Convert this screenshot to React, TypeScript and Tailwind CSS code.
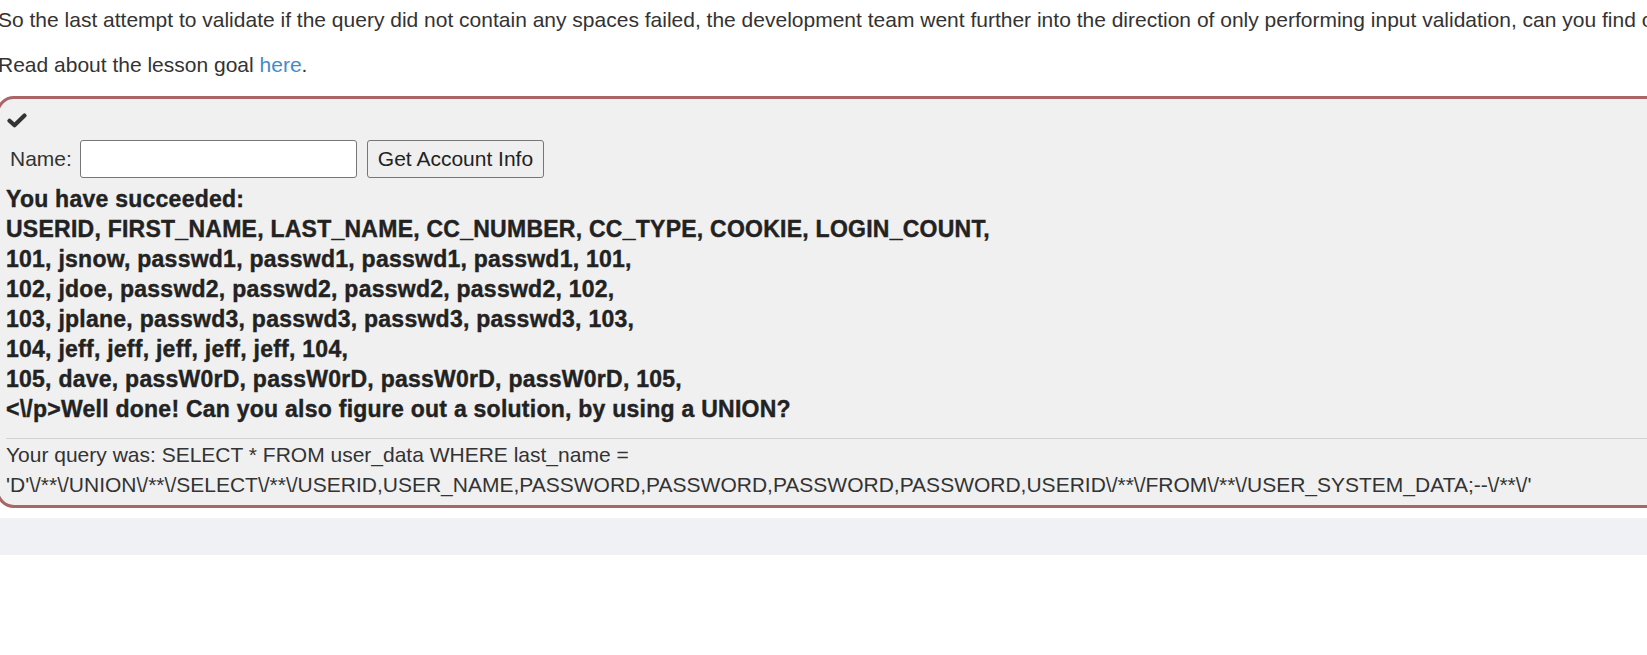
import React from 'react';

const rows = [
  'USERID, FIRST_NAME, LAST_NAME, CC_NUMBER, CC_TYPE, COOKIE, LOGIN_COUNT,',
  '101, jsnow, passwd1, passwd1, passwd1, passwd1, 101,',
  '102, jdoe, passwd2, passwd2, passwd2, passwd2, 102,',
  '103, jplane, passwd3, passwd3, passwd3, passwd3, 103,',
  '104, jeff, jeff, jeff, jeff, jeff, 104,',
  '105, dave, passW0rD, passW0rD, passW0rD, passW0rD, 105,',
  '<\\/p>Well done! Can you also figure out a solution, by using a UNION?',
];

const query =
  "'D'\\/**\\/UNION\\/**\\/SELECT\\/**\\/USERID,USER_NAME,PASSWORD,PASSWORD,PASSWORD,PASSWORD,USERID\\/**\\/FROM\\/**\\/USER_SYSTEM_DATA;--\\/**\\/'";

const App: React.FC = () => {
  return (
    <div className="w-[1647px] h-[655px] overflow-hidden bg-white text-[#333] font-['Liberation_Sans',Arial,sans-serif] text-[21px] leading-[30px]">
      <div className="w-[1720px] ml-[-2px] pt-[5px]">
        <p className="mb-[15px] whitespace-nowrap">
          So the last attempt to validate if the query did not contain any spaces failed, the development team went
          further into the direction of only performing input validation, can you find out the weaknesses this time?
        </p>
        <p className="mb-[16px]">
          Read about the lesson goal <a className="text-[#428bca]">here</a>.
        </p>

        {/* attack container */}
        <div className="ml-[-2px] border-[3px] border-[#aa6666] rounded-[18px] bg-[#f0f0f0] pl-[7px] pr-[8px] pt-[14px] pb-[5px]">
          <svg width="20" height="15" viewBox="0 0 20 15" className="block ml-[1px]">
            <polyline
              points="2.5,7.8 7.5,12.3 17.5,2.6"
              fill="none"
              stroke="#333"
              strokeWidth="4.2"
              strokeLinecap="round"
              strokeLinejoin="round"
            />
          </svg>

          <div className="flex items-center mt-[12px] h-[38px]">
            <label className="ml-[4px] mr-[8px]">Name:</label>
            <input
              type="text"
              className="w-[277px] h-[38px] bg-white border border-[#767676] rounded-[3px]"
            />
            <button className="ml-[10px] h-[38px] px-[10px] bg-[#efefef] border border-[#767676] rounded-[3px] text-[#222]">
              Get Account Info
            </button>
          </div>

          <div className="mt-[6px] font-bold text-[23px] tracking-[0.25px] leading-[30px] text-[#222] [-webkit-text-stroke:0.4px_#222]">
            <div>You have succeeded:</div>
            {rows.map((r, i) => (
              <div key={i}>{r}</div>
            ))}
          </div>

          <div className="mt-[14px] border-t border-[#d2d2d2]" />

          <div className="mt-[1px]">
            Your query was: SELECT * FROM user_data WHERE last_name = {query}
          </div>
        </div>

        <div className="mt-[10px] h-[37px] bg-[#f0f1f5] ml-[2px]" />
      </div>
    </div>
  );
};

export default App;
